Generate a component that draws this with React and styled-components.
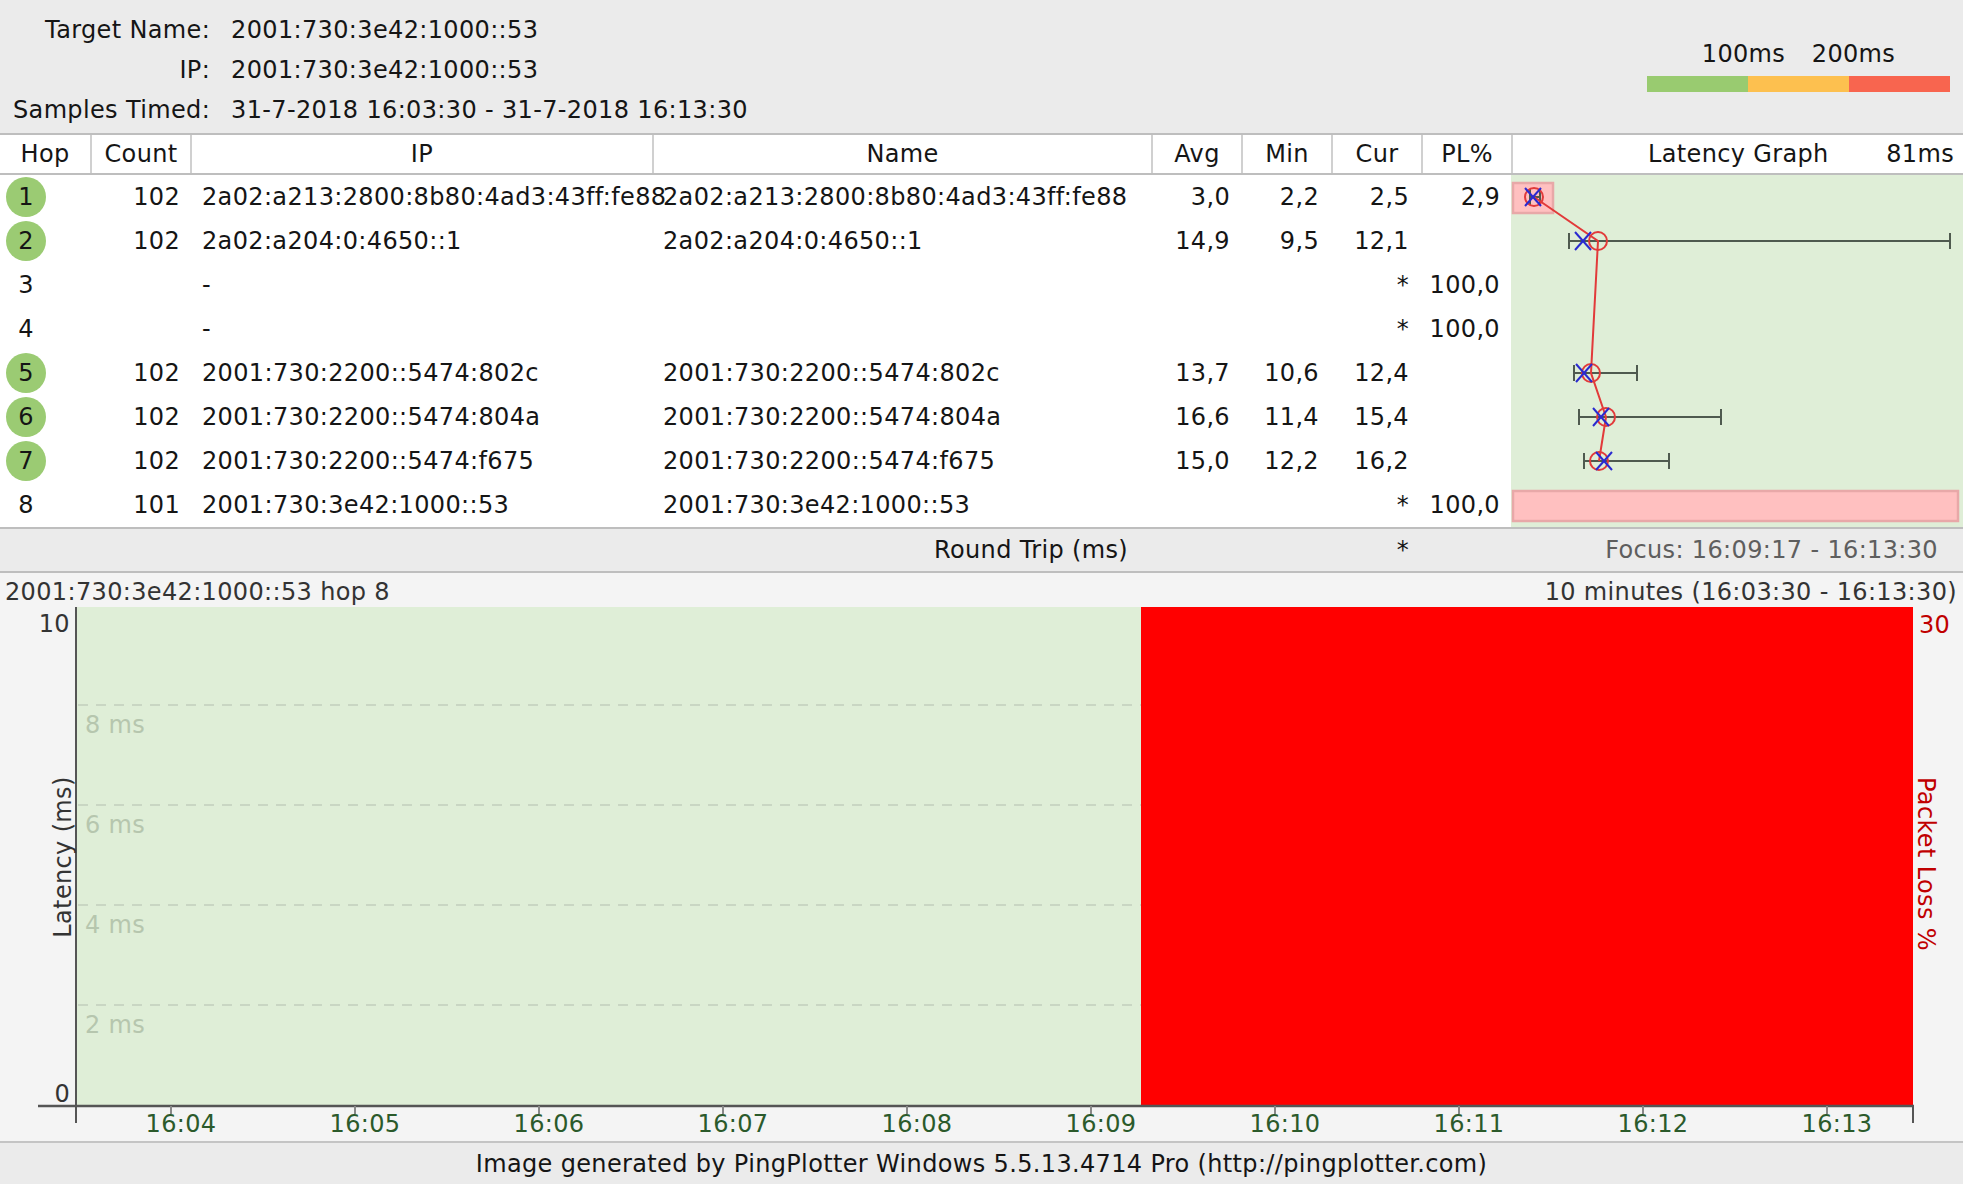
import React from 'react';
import styled, { createGlobalStyle } from 'styled-components';

const GlobalStyle = createGlobalStyle`
  html, body { margin: 0; padding: 0; background: #f4f4f4; }
  body { font-family: "DejaVu Sans", Verdana, sans-serif; font-size: 24px; letter-spacing: 0.35px; color: #151515; }
  * { box-sizing: border-box; }
`;

const COLS = '90px 100px 462px 499px 90px 90px 90px 90px 452px';
const DATA_COLS = '90px 100px 462px 499px 90px 90px 90px 90px';

const Page = styled.div`
  width: 1963px;
  height: 1184px;
  overflow: hidden;
  display: flex;
  flex-direction: column;
  background: #f4f4f4;
`;

const InfoPanel = styled.header`
  height: 133px;
  flex: none;
  background: #ebebeb;
  display: flex;
  justify-content: space-between;
  align-items: flex-start;
  padding: 10px 13px 0 13px;
`;

const InfoGrid = styled.dl`
  margin: 0;
  display: grid;
  grid-template-columns: auto auto;
  grid-auto-rows: 40px;
  column-gap: 21px;
  align-items: center;
`;

const InfoLabel = styled.dt`
  margin: 0;
  text-align: right;
`;

const InfoValue = styled.dd`
  margin: 0;
`;

const Legend = styled.div`
  margin-top: 30px;
  width: 303px;
`;

const LegendLabels = styled.div`
  display: flex;
  gap: 9px;
  padding-left: 46px;
  height: 28px;
  line-height: 28px;
`;

const LegendLabel = styled.span`
  width: 101px;
  text-align: center;
`;

const LegendBar = styled.div`
  margin-top: 8px;
  display: flex;
  height: 16px;
`;

const LegendSwatch = styled.span`
  flex: 1;
  background: ${p => p.$color};
`;

const TableHead = styled.div`
  flex: none;
  display: grid;
  grid-template-columns: ${COLS};
  height: 42px;
  background: #fff;
  border-top: 2px solid #bebebe;
  border-bottom: 2px solid #bebebe;
`;

const HeadCell = styled.div`
  display: flex;
  align-items: center;
  justify-content: ${p => p.$justify || 'center'};
  padding: ${p => p.$pad || '0'};
  border-left: ${p => (p.$sep ? '2px solid #d0d0d0' : 'none')};
  white-space: nowrap;
`;

const TableBody = styled.div`
  flex: none;
  display: flex;
  height: 352px;
  background: #fff;
`;

const Rows = styled.div`
  width: 1511px;
`;

const Row = styled.div`
  display: grid;
  grid-template-columns: ${DATA_COLS};
  height: 44px;
  align-items: center;
  white-space: nowrap;
`;

const Cell = styled.div`
  text-align: ${p => p.$align || 'left'};
  padding: ${p => p.$pad || '0'};
  overflow: visible;
`;

const HopCell = styled.div`
  padding-left: 6px;
  display: flex;
  align-items: center;
`;

const HopBadge = styled.span`
  width: 40px;
  height: 40px;
  border-radius: 50%;
  display: flex;
  align-items: center;
  justify-content: center;
  background: ${p => (p.$active ? '#9bcb73' : 'transparent')};
`;

const GraphColumn = styled.div`
  width: 452px;
  height: 352px;
  background: #dfeed7;
`;

const SummaryBar = styled.div`
  flex: none;
  display: grid;
  grid-template-columns: ${COLS};
  height: 46px;
  align-items: center;
  background: #ebebeb;
  border-top: 2px solid #bebebe;
  border-bottom: 2px solid #bebebe;
  white-space: nowrap;
`;

const SummaryCell = styled.div`
  grid-column: ${p => p.$col};
  text-align: right;
  padding-right: ${p => p.$pr || 0}px;
  color: ${p => (p.$muted ? '#5e5e5e' : '#151515')};
`;

const ChartSection = styled.section`
  flex: none;
  height: 568px;
  background: #f4f4f4;
  display: flex;
  flex-direction: column;
`;

const ChartTitle = styled.div`
  height: 34px;
  padding: 4px 6px 0 5px;
  line-height: 30px;
  display: flex;
  justify-content: space-between;
  color: #333;
  white-space: nowrap;
`;

const ChartSvg = styled.svg`
  display: block;
  font-family: "DejaVu Sans", Verdana, sans-serif;
  font-size: 24px;
`;

const Footer = styled.footer`
  flex: none;
  height: 43px;
  background: #ebebeb;
  border-top: 2px solid #c4c4c4;
  display: flex;
  align-items: center;
  justify-content: center;
  color: #151515;
`;

const hops = [
  { hop: 1, active: true, count: '102', ip: '2a02:a213:2800:8b80:4ad3:43ff:fe88', name: '2a02:a213:2800:8b80:4ad3:43ff:fe88', avg: '3,0', min: '2,2', cur: '2,5', pl: '2,9' },
  { hop: 2, active: true, count: '102', ip: '2a02:a204:0:4650::1', name: '2a02:a204:0:4650::1', avg: '14,9', min: '9,5', cur: '12,1', pl: '' },
  { hop: 3, active: false, count: '', ip: '-', name: '', avg: '', min: '', cur: '*', pl: '100,0' },
  { hop: 4, active: false, count: '', ip: '-', name: '', avg: '', min: '', cur: '*', pl: '100,0' },
  { hop: 5, active: true, count: '102', ip: '2001:730:2200::5474:802c', name: '2001:730:2200::5474:802c', avg: '13,7', min: '10,6', cur: '12,4', pl: '' },
  { hop: 6, active: true, count: '102', ip: '2001:730:2200::5474:804a', name: '2001:730:2200::5474:804a', avg: '16,6', min: '11,4', cur: '15,4', pl: '' },
  { hop: 7, active: true, count: '102', ip: '2001:730:2200::5474:f675', name: '2001:730:2200::5474:f675', avg: '15,0', min: '12,2', cur: '16,2', pl: '' },
  { hop: 8, active: false, count: '101', ip: '2001:730:3e42:1000::53', name: '2001:730:3e42:1000::53', avg: '', min: '', cur: '*', pl: '100,0' },
];

// latency graph markers (x in px within graph column)
const marks = [
  { row: 0, avg: 23, cur: 22, lo: 19, hi: 29 },
  { row: 1, avg: 87, cur: 72, lo: 58, hi: 439 },
  { row: 4, avg: 80, cur: 73, lo: 63, hi: 126 },
  { row: 5, avg: 95, cur: 90, lo: 68, hi: 210 },
  { row: 6, avg: 88, cur: 93, lo: 73, hi: 158 },
];
const rowY = r => 22 + r * 44;

function LatencyGraph() {
  const linePts = marks.map(m => `${m.avg},${rowY(m.row)}`).join(' ');
  return (
    <svg width="452" height="352" viewBox="0 0 452 352">
      <rect x="2" y="8" width="40" height="30" fill="#ffc0c0" stroke="#e8a8a8" strokeWidth="2.5" />
      <rect x="2" y="316" width="445" height="30" fill="#ffc0c0" stroke="#e8a8a8" strokeWidth="2.5" />
      {marks.map(m => {
        const y = rowY(m.row);
        return (
          <g key={m.row} stroke="#4f5a4f" strokeWidth="2">
            <line x1={m.lo} y1={y} x2={m.hi} y2={y} />
            <line x1={m.lo} y1={y - 8} x2={m.lo} y2={y + 8} />
            <line x1={m.hi} y1={y - 8} x2={m.hi} y2={y + 8} />
          </g>
        );
      })}
      <polyline points={linePts} fill="none" stroke="#e23a3a" strokeWidth="2" />
      {marks.map(m => {
        const y = rowY(m.row);
        return (
          <g key={'m' + m.row}>
            <circle cx={m.avg} cy={y} r="9" fill="none" stroke="#e23a3a" strokeWidth="2" />
            <g stroke="#2a2ad0" strokeWidth="2">
              <line x1={m.cur - 8} y1={y - 9} x2={m.cur + 8} y2={y + 9} />
              <line x1={m.cur + 8} y1={y - 9} x2={m.cur - 8} y2={y + 9} />
            </g>
          </g>
        );
      })}
    </svg>
  );
}

const timeLabels = ['16:04', '16:05', '16:06', '16:07', '16:08', '16:09', '16:10', '16:11', '16:12', '16:13'];
const gridLines = [
  { y: 98, label: '8 ms' },
  { y: 198, label: '6 ms' },
  { y: 298, label: '4 ms' },
  { y: 398, label: '2 ms' },
];

function TimeChart() {
  const left = 76;
  const right = 1913;
  const bottom = 498;
  const split = 1141;
  return (
    <ChartSvg width="1963" height="534" viewBox="0 0 1963 534">
      <rect x={left} y="0" width={split - left} height={bottom} fill="#dfeed7" />
      {gridLines.map(g => (
        <g key={g.y}>
          <line x1={left + 2} y1={g.y} x2={split} y2={g.y} stroke="#c9d6c3" strokeWidth="2" strokeDasharray="10 8" />
          <text x="85" y={g.y + 28} fill="#b6c6ae">{g.label}</text>
        </g>
      ))}
      <rect x={split} y="0" width={right - split} height={bottom} fill="#ff0000" />
      <line x1={left} y1="0" x2={left} y2="516" stroke="#555" strokeWidth="2" />
      <line x1="38" y1="499" x2={right + 1} y2="499" stroke="#555" strokeWidth="2.5" />
      <line x1={right} y1="499" x2={right} y2="516" stroke="#555" strokeWidth="2" />
      {timeLabels.map((t, i) => {
        const x = 171 + i * 184;
        return (
          <g key={t}>
            <line x1={x} y1="499" x2={x} y2="507" stroke="#888" strokeWidth="2" />
            <text x={x + 10} y="525" textAnchor="middle" fill="#2b5a2b">{t}</text>
          </g>
        );
      })}
      <text x="70" y="25" textAnchor="end" fill="#333">10</text>
      <text x="70" y="495" textAnchor="end" fill="#333">0</text>
      <text transform="translate(71,250) rotate(-90)" textAnchor="middle" fill="#333">Latency (ms)</text>
      <text x="1919" y="26" fill="#c00000">30</text>
      <text transform="translate(1918,257) rotate(90)" textAnchor="middle" fill="#c00000">Packet Loss %</text>
    </ChartSvg>
  );
}

export default function App() {
  return (
    <Page>
      <GlobalStyle />
      <InfoPanel>
        <InfoGrid>
          <InfoLabel>Target Name:</InfoLabel>
          <InfoValue>2001:730:3e42:1000::53</InfoValue>
          <InfoLabel>IP:</InfoLabel>
          <InfoValue>2001:730:3e42:1000::53</InfoValue>
          <InfoLabel>Samples Timed:</InfoLabel>
          <InfoValue>31-7-2018 16:03:30 - 31-7-2018 16:13:30</InfoValue>
        </InfoGrid>
        <Legend>
          <LegendLabels>
            <LegendLabel>100ms</LegendLabel>
            <LegendLabel>200ms</LegendLabel>
          </LegendLabels>
          <LegendBar>
            <LegendSwatch $color="#99cb70" />
            <LegendSwatch $color="#fdc04f" />
            <LegendSwatch $color="#f8654f" />
          </LegendBar>
        </Legend>
      </InfoPanel>

      <TableHead>
        <HeadCell>Hop</HeadCell>
        <HeadCell $sep>Count</HeadCell>
        <HeadCell $sep>IP</HeadCell>
        <HeadCell $sep>Name</HeadCell>
        <HeadCell $sep>Avg</HeadCell>
        <HeadCell $sep>Min</HeadCell>
        <HeadCell $sep>Cur</HeadCell>
        <HeadCell $sep>PL%</HeadCell>
        <HeadCell $sep $justify="space-between" $pad="0 9px 0 135px">
          <span>Latency Graph</span>
          <span>81ms</span>
        </HeadCell>
      </TableHead>

      <TableBody>
        <Rows>
          {hops.map(h => (
            <Row key={h.hop}>
              <HopCell>
                <HopBadge $active={h.active}>{h.hop}</HopBadge>
              </HopCell>
              <Cell $align="right" $pad="0 10px 0 0">{h.count}</Cell>
              <Cell $pad="0 0 0 12px">{h.ip}</Cell>
              <Cell $pad="0 0 0 11px">{h.name}</Cell>
              <Cell $align="right" $pad="0 11px 0 0">{h.avg}</Cell>
              <Cell $align="right" $pad="0 12px 0 0">{h.min}</Cell>
              <Cell $align="right" $pad="0 12px 0 0">{h.cur}</Cell>
              <Cell $align="right" $pad="0 11px 0 0">{h.pl}</Cell>
            </Row>
          ))}
        </Rows>
        <GraphColumn>
          <LatencyGraph />
        </GraphColumn>
      </TableBody>

      <SummaryBar>
        <SummaryCell $col="3 / 5" $pr={23}>Round Trip (ms)</SummaryCell>
        <SummaryCell $col="7 / 8" $pr={12}>*</SummaryCell>
        <SummaryCell $col="9 / 10" $pr={25} $muted>Focus: 16:09:17 - 16:13:30</SummaryCell>
      </SummaryBar>

      <ChartSection>
        <ChartTitle>
          <span>2001:730:3e42:1000::53 hop 8</span>
          <span>10 minutes (16:03:30 - 16:13:30)</span>
        </ChartTitle>
        <TimeChart />
      </ChartSection>

      <Footer>Image generated by PingPlotter Windows 5.5.13.4714 Pro (http://pingplotter.com)</Footer>
    </Page>
  );
}
